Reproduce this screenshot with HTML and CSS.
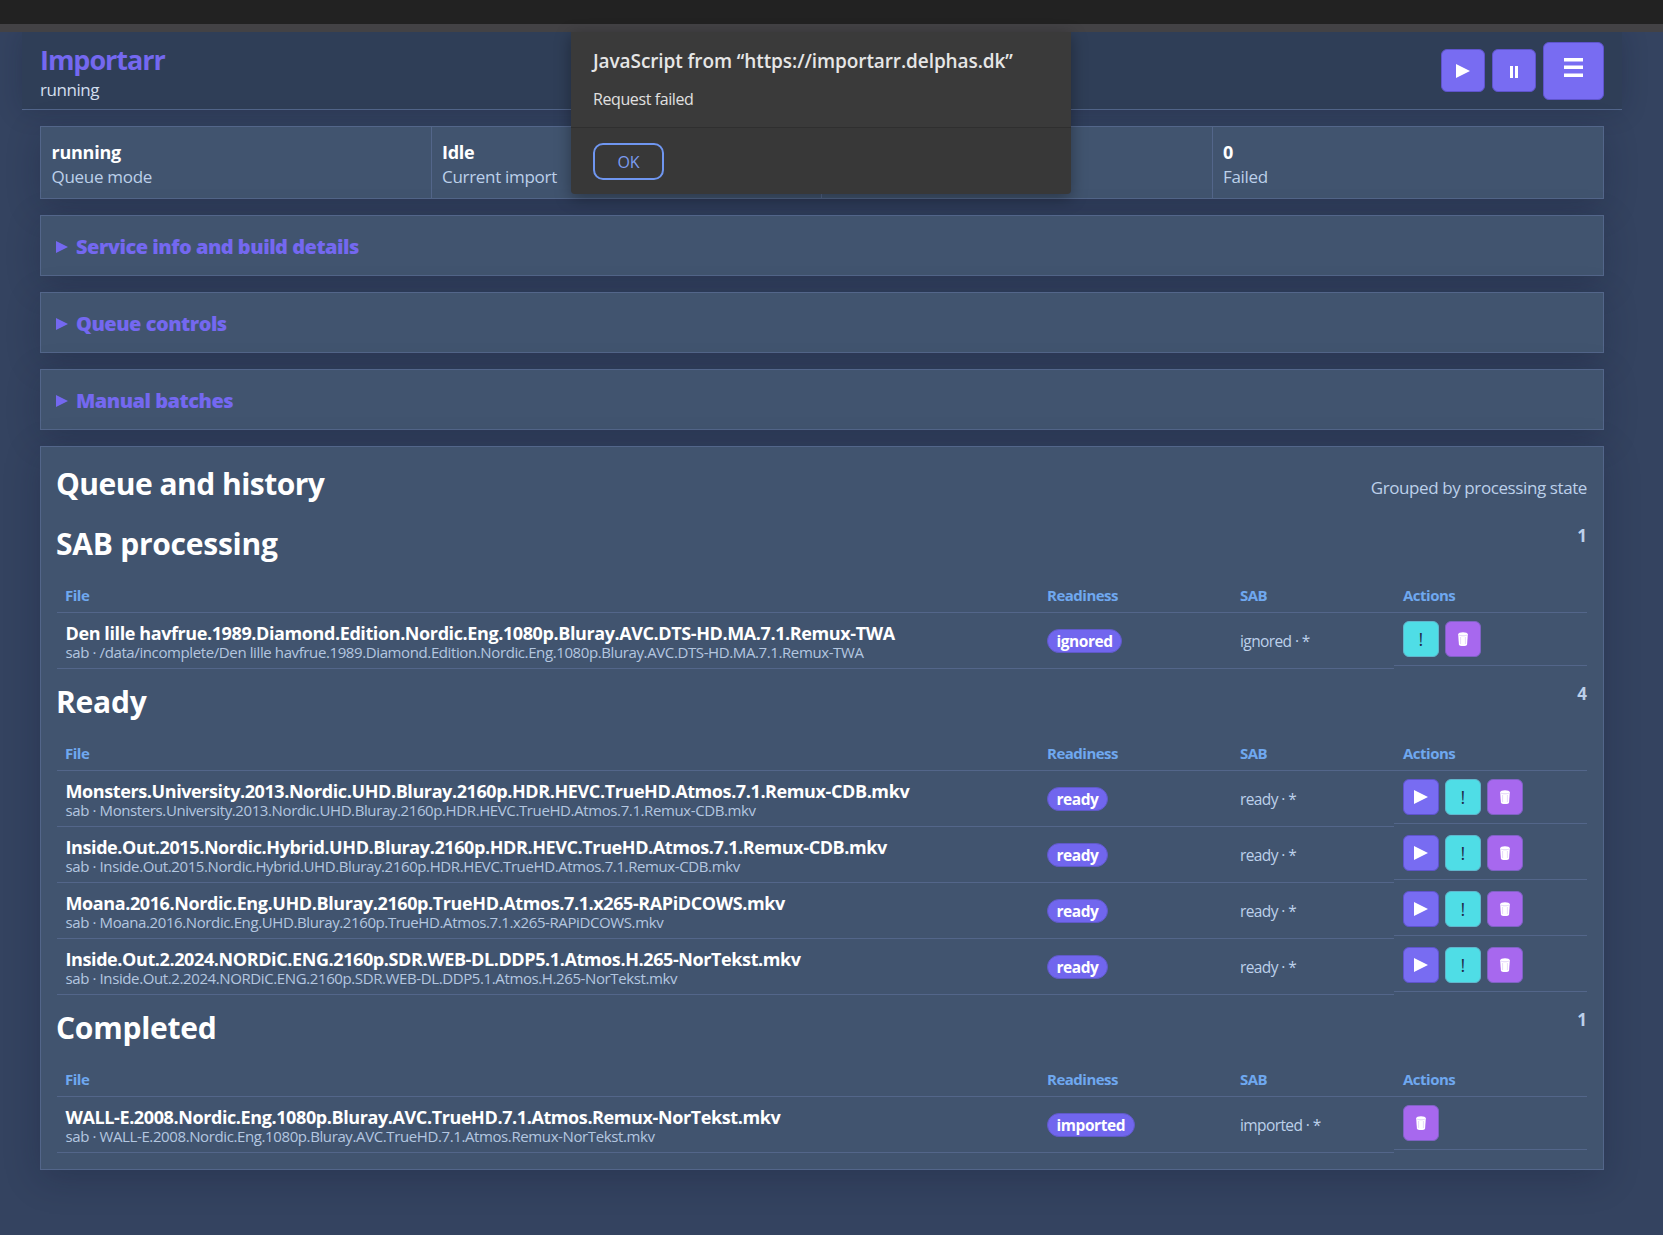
FILE: index.html
```html
<!DOCTYPE html>
<html lang="en">
<head>
<meta charset="utf-8">
<title>Importarr</title>
<link rel="stylesheet" href="styles.css">
</head>
<body>
<svg class="defs" width="0" height="0" aria-hidden="true">
  <symbol id="i-play" viewBox="0 0 14 14"><path d="M0 0 14 7 0 14Z" fill="#fff"/></symbol>
  <symbol id="i-pause" viewBox="0 0 8 12"><path d="M0 0h3v12H0zM5 0h3v12H5z" fill="#fff"/></symbol>
  <symbol id="i-menu" viewBox="0 0 19 19"><path d="M0 0h19v3.500H0zM0 7.500h19v3.500H0zM0 15.500h19v3.500H0z" fill="#fff"/></symbol>
  <symbol id="i-trash" viewBox="0 0 10 14"><path d="M.2 2.200C.2 1 2.400.2 5 .2s4.800.8 4.800 2l-.7 10.200C9 13.500 7 14 5 14s-4-.5-4.100-1.600Z" fill="#fff"/><path d="M1.200 3.200C2.800 4 7.200 4 8.800 3.200" fill="none" stroke="#d9c6f8" stroke-width=".8"/><path d="M2.600 5v7M7.400 5v7" stroke="#e6daf9" stroke-width="1"/></symbol>
</svg>
<div class="chrome"></div>
<div class="chrome-edge"></div>
<div class="page">
  <header class="topbar">
    <div class="brand">
      <h1>Importarr</h1>
      <p>running</p>
    </div>
    <div class="top-actions">
      <button class="btn violet top-btn"><svg class="ic-play"><use href="#i-play"/></svg></button>
      <button class="btn violet top-btn"><svg class="ic-pause"><use href="#i-pause"/></svg></button>
      <button class="btn violet menu-btn"><svg class="ic-menu"><use href="#i-menu"/></svg></button>
    </div>
  </header>
  <main class="content">
    <section class="stats card">
      <div class="stat"><strong>running</strong><span>Queue mode</span></div>
      <div class="stat"><strong>Idle</strong><span>Current import</span></div>
      <div class="stat"></div>
      <div class="stat"><strong>0</strong><span>Failed</span></div>
    </section>
    <div class="fold card"><i class="caret"></i>Service info and build details</div>
    <div class="fold card"><i class="caret"></i>Queue controls</div>
    <div class="fold card"><i class="caret"></i>Manual batches</div>
    <section class="panel card">
      <div class="panel-head">
        <h2>Queue and history</h2>
        <span>Grouped by processing state</span>
      </div>

      <div class="group-head"><h3>SAB processing</h3><span>1</span></div>
      <table>
        <colgroup><col class="c-file"><col class="c-ready"><col class="c-sab"><col class="c-act"></colgroup>
        <thead><tr><th>File</th><th>Readiness</th><th>SAB</th><th>Actions</th></tr></thead>
        <tbody>
          <tr>
            <td class="file"><div class="name">Den lille havfrue.1989.Diamond.Edition.Nordic.Eng.1080p.Bluray.AVC.DTS-HD.MA.7.1.Remux-TWA</div><div class="sub">sab · /data/incomplete/Den lille havfrue.1989.Diamond.Edition.Nordic.Eng.1080p.Bluray.AVC.DTS-HD.MA.7.1.Remux-TWA</div></td>
            <td><span class="pill">ignored</span></td>
            <td class="state">ignored · *</td>
            <td class="acts">
              <button class="btn cyan act">!</button>
              <button class="btn purple act"><svg class="ic-trash"><use href="#i-trash"/></svg></button>
            </td>
          </tr>
        </tbody>
      </table>

      <div class="group-head"><h3>Ready</h3><span>4</span></div>
      <table>
        <colgroup><col class="c-file"><col class="c-ready"><col class="c-sab"><col class="c-act"></colgroup>
        <thead><tr><th>File</th><th>Readiness</th><th>SAB</th><th>Actions</th></tr></thead>
        <tbody>
          <tr>
            <td class="file"><div class="name">Monsters.University.2013.Nordic.UHD.Bluray.2160p.HDR.HEVC.TrueHD.Atmos.7.1.Remux-CDB.mkv</div><div class="sub">sab · Monsters.University.2013.Nordic.UHD.Bluray.2160p.HDR.HEVC.TrueHD.Atmos.7.1.Remux-CDB.mkv</div></td>
            <td><span class="pill">ready</span></td>
            <td class="state">ready · *</td>
            <td class="acts">
              <button class="btn violet act"><svg class="ic-play"><use href="#i-play"/></svg></button>
              <button class="btn cyan act">!</button>
              <button class="btn purple act"><svg class="ic-trash"><use href="#i-trash"/></svg></button>
            </td>
          </tr>
          <tr>
            <td class="file"><div class="name">Inside.Out.2015.Nordic.Hybrid.UHD.Bluray.2160p.HDR.HEVC.TrueHD.Atmos.7.1.Remux-CDB.mkv</div><div class="sub">sab · Inside.Out.2015.Nordic.Hybrid.UHD.Bluray.2160p.HDR.HEVC.TrueHD.Atmos.7.1.Remux-CDB.mkv</div></td>
            <td><span class="pill">ready</span></td>
            <td class="state">ready · *</td>
            <td class="acts">
              <button class="btn violet act"><svg class="ic-play"><use href="#i-play"/></svg></button>
              <button class="btn cyan act">!</button>
              <button class="btn purple act"><svg class="ic-trash"><use href="#i-trash"/></svg></button>
            </td>
          </tr>
          <tr>
            <td class="file"><div class="name">Moana.2016.Nordic.Eng.UHD.Bluray.2160p.TrueHD.Atmos.7.1.x265-RAPiDCOWS.mkv</div><div class="sub">sab · Moana.2016.Nordic.Eng.UHD.Bluray.2160p.TrueHD.Atmos.7.1.x265-RAPiDCOWS.mkv</div></td>
            <td><span class="pill">ready</span></td>
            <td class="state">ready · *</td>
            <td class="acts">
              <button class="btn violet act"><svg class="ic-play"><use href="#i-play"/></svg></button>
              <button class="btn cyan act">!</button>
              <button class="btn purple act"><svg class="ic-trash"><use href="#i-trash"/></svg></button>
            </td>
          </tr>
          <tr>
            <td class="file"><div class="name">Inside.Out.2.2024.NORDiC.ENG.2160p.SDR.WEB-DL.DDP5.1.Atmos.H.265-NorTekst.mkv</div><div class="sub">sab · Inside.Out.2.2024.NORDiC.ENG.2160p.SDR.WEB-DL.DDP5.1.Atmos.H.265-NorTekst.mkv</div></td>
            <td><span class="pill">ready</span></td>
            <td class="state">ready · *</td>
            <td class="acts">
              <button class="btn violet act"><svg class="ic-play"><use href="#i-play"/></svg></button>
              <button class="btn cyan act">!</button>
              <button class="btn purple act"><svg class="ic-trash"><use href="#i-trash"/></svg></button>
            </td>
          </tr>
        </tbody>
      </table>

      <div class="group-head"><h3>Completed</h3><span>1</span></div>
      <table>
        <colgroup><col class="c-file"><col class="c-ready"><col class="c-sab"><col class="c-act"></colgroup>
        <thead><tr><th>File</th><th>Readiness</th><th>SAB</th><th>Actions</th></tr></thead>
        <tbody>
          <tr>
            <td class="file"><div class="name">WALL-E.2008.Nordic.Eng.1080p.Bluray.AVC.TrueHD.7.1.Atmos.Remux-NorTekst.mkv</div><div class="sub">sab · WALL-E.2008.Nordic.Eng.1080p.Bluray.AVC.TrueHD.7.1.Atmos.Remux-NorTekst.mkv</div></td>
            <td><span class="pill">imported</span></td>
            <td class="state">imported · *</td>
            <td class="acts">
              <button class="btn purple act"><svg class="ic-trash"><use href="#i-trash"/></svg></button>
            </td>
          </tr>
        </tbody>
      </table>
    </section>
  </main>
</div>
<div class="dialog" role="alertdialog">
  <div class="dialog-body">
    <div class="dialog-title">JavaScript from “https://importarr.delphas.dk”</div>
    <div class="dialog-msg">Request failed</div>
  </div>
  <div class="dialog-foot"><button class="dialog-ok">OK</button></div>
</div>
</body>
</html>
```
FILE: styles.css
```css
* { box-sizing: border-box; }
html, body { margin: 0; padding: 0; }
body {
  min-height: 1235px;
  background: #344360;
  color: #fff;
  font-family: "Open Sans", "Noto Sans", "Liberation Sans", sans-serif;
  overflow: hidden;
}
.defs { position: absolute; }
.chrome { position: relative; z-index: 1; height: 24px; background: #222222; }
.chrome-edge { position: relative; z-index: 1; height: 8px; background: #434245; }

.topbar {
  height: 78px;
  margin: 0 41px 0 22px;
  padding: 0 18px;
  display: flex;
  align-items: center;
  justify-content: space-between;
  border-bottom: 1px solid #52658a;
  background: #2f3e57;
  box-shadow: 0 0 26px rgba(12, 18, 40, .22);
}
.brand h1 { margin: 0; font-size: 27px; line-height: 36px; font-weight: 700; color: #7468f0; letter-spacing: -1.05px; }
.brand p { margin: 1px 0 -1px; font-size: 17px; line-height: 22px; color: #d3dfee; letter-spacing: -.45px; }
.top-actions { display: flex; align-items: center; gap: 7px; }

.btn {
  display: flex;
  align-items: center;
  justify-content: center;
  padding: 0;
  border-radius: 6px;
  border: 1px solid transparent;
  font-family: inherit;
}
.violet { background: #786cf2; border-color: #5f54cc; }
.cyan { background: #4fdde6; border-color: #5fb6cc; color: #1e2a4a; font-size: 18px; line-height: 1; }
.purple { background: #a768ee; border-color: #7f62c4; }
.top-btn { width: 44px; height: 43px; }
.menu-btn { width: 61px; height: 58px; }
.act { width: 36px; height: 36px; }
.ic-play { width: 14px; height: 14px; }
.ic-pause { width: 8px; height: 12px; margin-top: 3px; }
.ic-menu { width: 19px; height: 19px; margin-bottom: 6px; }
.ic-trash { width: 10px; height: 14px; }

.content {
  width: 1564px;
  margin-left: 40px;
  padding-top: 16px;
  display: flex;
  flex-direction: column;
  gap: 16px;
}
.card {
  background: #41546f;
  border: 1px solid #53668a;
  box-shadow: 0 8px 34px rgba(12, 18, 40, .24);
}
.stats { height: 73px; display: grid; grid-template-columns: repeat(4, 1fr); }
.stat {
  padding: 13px 10.500px 0;
  border-right: 1px solid #53668a;
  display: flex;
  flex-direction: column;
}
.stat:last-child { border-right: 0; }
.stat strong { font-size: 18px; line-height: 24px; font-weight: 700; letter-spacing: -.25px; }
.stat span { margin-top: 1px; font-size: 17px; line-height: 24px; color: #bcd0ea; letter-spacing: -.3px; }

.fold {
  height: 61px;
  padding: 2px 0 0 15px;
  display: flex;
  align-items: center;
  font-size: 20px;
  font-weight: 800;
  color: #7468f0;
  letter-spacing: -.5px;
}
.caret {
  width: 0;
  height: 0;
  margin-right: 8px;
  border-style: solid;
  border-width: 6.500px 0 6.500px 12px;
  border-color: transparent transparent transparent #7468f0;
}

.panel { padding: 16px 16px 16px; }
.panel-head { display: flex; justify-content: space-between; align-items: center; height: 42px; margin-bottom: 19px; }
h2 { margin: 0 0 0 -1px; font-size: 30px; line-height: 42px; font-weight: 700; letter-spacing: -.52px; }
.panel-head span { font-size: 17px; color: #bcd0ea; letter-spacing: -.4px; margin-top: 6px; }
.group-head { display: flex; justify-content: space-between; align-items: flex-start; height: 40px; margin-bottom: 16px; }
h3 { margin: 0 0 0 -1px; font-size: 30px; line-height: 40px; font-weight: 700; letter-spacing: -.25px; }
.group-head span { font-size: 17px; line-height: 24px; font-weight: 700; color: #bcd0ea; }

table { width: 100%; table-layout: fixed; border-collapse: separate; border-spacing: 0; margin-bottom: 13px; }
table:last-child { margin-bottom: 0; }
.c-file { width: 981px; }
.c-ready { width: 193px; }
.c-sab { width: 163px; }
.c-act { width: 193px; }
th {
  height: 33px;
  padding: 0 9px 2px;
  text-align: left;
  vertical-align: middle;
  font-size: 15px;
  font-weight: 700;
  color: #6fa8ef;
  letter-spacing: -.5px;
  border-bottom: 1px solid #53668a;
}
th:first-child { padding-left: 8px; }
td {
  height: 56px;
  padding: 0 9px;
  vertical-align: middle;
  border-bottom: 1px solid #53668a;
}
td.file { padding: 3px 8.500px 0; }
.name { font-size: 18px; line-height: 19px; font-weight: 700; letter-spacing: -.4px; white-space: nowrap; }
.sub { font-size: 15px; line-height: 18px; color: #b4c7e0; letter-spacing: -.39px; white-space: nowrap; }
.state { font-size: 15.500px; color: #bcd0ea; letter-spacing: -.6px; }
.pill {
  display: inline-block;
  height: 24px;
  padding: 0 8.500px;
  line-height: 22px;
  border-radius: 12px;
  background: #7166ee;
  border: 1px solid #5f59c8;
  font-size: 15.500px;
  font-weight: 700;
  letter-spacing: -.45px;
  vertical-align: middle;
}
td.acts { display: flex; gap: 6px; height: 53px; padding: 8px 0 0 9px; }

.dialog {
  position: absolute;
  z-index: 2;
  left: 571px;
  top: 32px;
  width: 500px;
  height: 162px;
  background: #383838;
  border-radius: 0 0 4px 4px;
  box-shadow: 0 4px 16px rgba(0, 0, 0, .35);
}
.dialog-body { height: 96px; padding: 17px 22px 0; border-bottom: 1px solid #2f2f2f; background: #3a3a3a; }
.dialog-title { font-size: 19px; line-height: 24px; font-weight: 600; color: #e6e6e6; letter-spacing: -.09px; }
.dialog-msg { margin-top: 15px; font-size: 16px; line-height: 22px; color: #e0e0e0; letter-spacing: -.4px; }
.dialog-foot { padding: 15px 22px 0; }
.dialog-ok {
  width: 71px;
  height: 37px;
  padding: 0;
  border: 2px solid #6f96f0;
  border-radius: 10px;
  background: transparent;
  color: #7c9cf0;
  font-family: inherit;
  font-size: 16px;
}
```
